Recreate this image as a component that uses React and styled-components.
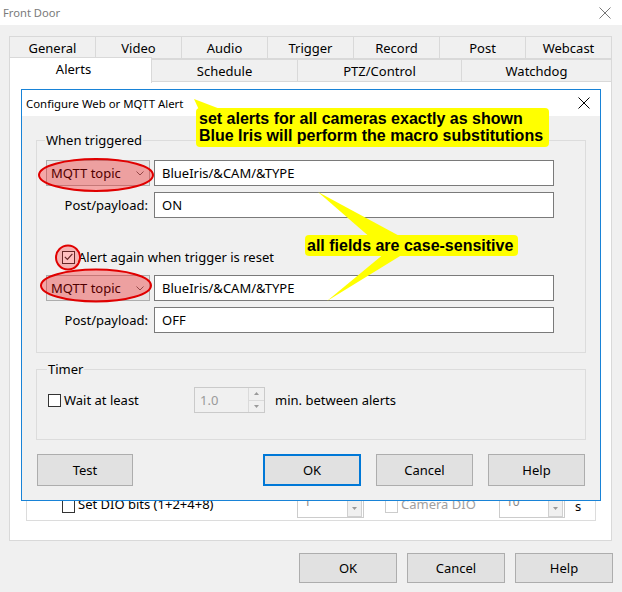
import React from "react";
import styled, { createGlobalStyle } from "styled-components";

const GlobalStyle = createGlobalStyle`
  html, body {
    margin: 0;
    padding: 0;
    background: #f0f0f0;
  }
  body {
    font-family: "Noto Sans", "Open Sans", sans-serif;
    font-size: 12px;
    color: #000;
  }
  * {
    box-sizing: border-box;
  }
`;

const Window = styled.div`
  width: 622px;
  height: 592px;
  background: #f0f0f0;
  display: flex;
  flex-direction: column;
  overflow: hidden;
`;

const TitleBar = styled.div`
  height: 25px;
  flex: none;
  background: #fff;
  display: flex;
  align-items: center;
  justify-content: space-between;
  padding: 0 11px 0 3px;
`;

const TitleText = styled.span`
  color: #7a7a7a;
  font-size: 11.2px;
`;

const Body = styled.div`
  padding: 11px 9px 0 9px;
  display: flex;
  flex-direction: column;
`;

const TabRow = styled.div`
  display: flex;
  height: 23px;
  margin-right: 1px;
`;

const Tab = styled.div`
  flex: ${(p) => (p.$w ? `0 0 ${p.$w}px` : "1")};
  display: flex;
  align-items: center;
  justify-content: center;
  border: 1px solid #d9d9d9;
  margin-left: -1px;
  background: ${(p) => (p.$active ? "#fff" : "#f0f0f0")};
  font-size: 13px;
  position: relative;
  z-index: ${(p) => (p.$active ? 2 : 1)};
  margin-top: ${(p) => (p.$active ? "-2px" : "0")};
  height: ${(p) => (p.$active ? "26px" : "23px")};
  border-bottom: ${(p) => (p.$active ? "none" : "1px solid #d9d9d9")};
  padding: ${(p) => (p.$active ? "0 14px 3px 0" : "0")};
  &:first-child {
    margin-left: 0;
  }
`;

const Panel = styled.div`
  height: 459px;
  margin-right: 1px;
  background: #fff;
  border: 1px solid #d9d9d9;
  border-top: none;
  position: relative;
  display: flex;
  flex-direction: column;
  justify-content: flex-end;
  padding: 0 15px 19px 16px;
`;

const DioGroup = styled.div`
  height: 60px;
  border: 1px solid #dcdcdc;
  display: flex;
  align-items: flex-end;
  padding: 0 0 2px 35px;
`;

const DioRow = styled.div`
  display: flex;
  align-items: center;
  height: 24px;
`;

const CheckLabel = styled.label`
  display: flex;
  align-items: center;
  width: ${(p) => p.$w}px;
  margin-left: ${(p) => p.$ml || 0}px;
  font-size: 13px;
  color: ${(p) => (p.$disabled ? "#a0a0a0" : "#000")};
`;

const RaisedText = styled.span`
  margin-bottom: 5px;
`;

const Box = styled.span`
  width: 13px;
  height: 13px;
  flex: none;
  border: 1px solid ${(p) => (p.$disabled ? "#cccccc" : "#333")};
  background: #fff;
  margin-right: 3px;
  display: flex;
  align-items: center;
  justify-content: center;
`;

const ComboInput = styled.div`
  width: ${(p) => p.$w}px;
  height: 24px;
  border: 1px solid #ccc;
  background: #fff;
  display: flex;
  align-items: flex-start;
  justify-content: space-between;
  padding: 0 1px 0 6px;
  color: #888;
  font-size: 12px;
  line-height: 14px;
`;

const ComboArrow = styled.span`
  width: 15px;
  height: 17px;
  margin-top: 5px;
  background: #f0f0f0;
  border: 1px solid #d0d0d0;
  display: flex;
  align-items: center;
  justify-content: center;
`;

const Unit = styled.span`
  margin-left: 10px;
  font-size: 13px;
`;

const Dialog = styled.div`
  position: absolute;
  left: 11px;
  top: 7px;
  width: 580px;
  border: 1px solid #1883d7;
  background: #f0f0f0;
  z-index: 5;
`;

const DialogTitle = styled.div`
  height: 26px;
  background: #fff;
  display: flex;
  align-items: center;
  justify-content: space-between;
  padding: 0 10px 0 4px;
  font-size: 11.4px;
`;

const DialogBody = styled.div`
  padding: 15px 14px 14px 14px;
  display: flex;
  flex-direction: column;
`;

const Group = styled.fieldset`
  margin: ${(p) => p.$mt || 0}px 0 0 0;
  border: 1px solid #dcdcdc;
  padding: ${(p) => p.$pad};
  min-width: 0;
`;

const Legend = styled.legend`
  padding: 0 1px;
  margin-left: -1px;
  font-size: 13px;
  line-height: 18px;
`;

const FieldGrid = styled.div`
  display: grid;
  grid-template-columns: 104px 1fr;
  column-gap: 4px;
  row-gap: 6px;
  margin-top: ${(p) => p.$mt || 0}px;
`;

const Dropdown = styled.div`
  height: 26px;
  background: #e5e5e5;
  border: 1px solid #adadad;
  display: flex;
  align-items: center;
  justify-content: space-between;
  padding: 0 5px 0 4px;
  font-size: 13px;
`;

const FieldLabel = styled.div`
  height: 26px;
  display: flex;
  align-items: center;
  justify-content: flex-end;
  padding-right: 2px;
  font-size: 13px;
`;

const TextField = styled.div`
  height: 26px;
  background: #fff;
  border: 1px solid #7a7a7a;
  display: flex;
  align-items: center;
  padding-left: 7px;
  font-size: 13px;
`;

const CheckRow = styled.div`
  display: flex;
  align-items: center;
  height: 18px;
  margin-top: ${(p) => p.$mt || 0}px;
  padding-left: ${(p) => p.$pl || 0}px;
  font-size: 13px;
`;

const TimerRow = styled.div`
  display: flex;
  align-items: center;
  height: 26px;
  font-size: 13px;
`;

const Spin = styled.div`
  width: 71px;
  height: 26px;
  border: 1px solid #cacaca;
  background: #f0f0f0;
  display: flex;
  color: #9a9a9a;
  margin-right: 10px;
`;

const SpinValue = styled.div`
  flex: 1;
  display: flex;
  align-items: center;
  padding-left: 5px;
`;

const SpinButtons = styled.div`
  width: 16px;
  display: flex;
  flex-direction: column;
  border-left: 1px solid #dadada;
`;

const SpinButton = styled.div`
  flex: 1;
  display: flex;
  align-items: center;
  justify-content: center;
  & + & {
    border-top: 1px solid #dadada;
  }
`;

const ButtonRow = styled.div`
  display: flex;
  margin-top: 14px;
  padding-left: 1px;
  gap: 15px;
`;

const Button = styled.div`
  width: ${(p) => p.$w || 97}px;
  height: ${(p) => p.$h || 32}px;
  background: #e1e1e1;
  border: ${(p) => (p.$default ? "2px solid #0078d7" : "1px solid #adadad")};
  display: flex;
  align-items: center;
  justify-content: center;
  font-size: 13px;
  margin-left: ${(p) => p.$ml || 0}px;
`;

const Footer = styled.div`
  display: flex;
  justify-content: flex-end;
  gap: 10px;
  margin-top: 12px;
`;

const Overlay = styled.div`
  position: absolute;
  inset: 0;
  pointer-events: none;
`;

const Callout = styled.div`
  position: absolute;
  left: ${(p) => p.$x}px;
  top: ${(p) => p.$y}px;
  background: #ffff00;
  border-radius: 4px;
  padding: ${(p) => p.$pad};
  font-family: "Liberation Sans", Arial, sans-serif;
  font-weight: bold;
  font-size: 16px;
  line-height: 17px;
  white-space: nowrap;
  color: #000;
`;

const Cross = ({ color = "#000", size = 12 }) => (
  <svg width={size} height={size} viewBox="0 0 12 12">
    <path d="M0.5 0.5 L11.5 11.5 M11.5 0.5 L0.5 11.5" stroke={color} strokeWidth="1" />
  </svg>
);

const Chevron = () => (
  <svg width="8" height="5" viewBox="0 0 8 5">
    <path d="M0.5 0.5 L4 4 L7.5 0.5" fill="none" stroke="#666" strokeWidth="1" />
  </svg>
);

const Tick = () => (
  <svg width="9" height="8" viewBox="0 0 9 8">
    <path d="M0.8 3.8 L3.4 6.4 L8.4 0.8" fill="none" stroke="#333" strokeWidth="1.2" />
  </svg>
);

const Tri = ({ up }) => (
  <svg width="5" height="3" viewBox="0 0 5 3">
    <path d={up ? "M0 3 L2.5 0 L5 3 Z" : "M0 0 L2.5 3 L5 0 Z"} fill="#9a9a9a" />
  </svg>
);

const CheckBox = ({ checked, disabled }) => (
  <Box $disabled={disabled}>{checked && <Tick />}</Box>
);

function Annotations() {
  return (
    <Overlay>
      <svg width="578" height="410" style={{ position: "absolute", left: 0, top: 0 }}>
        <polygon points="172,9 178,22 206,22" fill="#ffff00" />
        <polygon points="296,102 350,149 383,149" fill="#ffff00" />
        <polygon points="305,211 363,163 383,163" fill="#ffff00" />
        <ellipse cx="74" cy="85" rx="57" ry="16" fill="rgba(255,0,0,0.3)" stroke="#e00000" strokeWidth="2" />
        <ellipse cx="74" cy="195.5" rx="55" ry="16" fill="rgba(255,0,0,0.3)" stroke="#e00000" strokeWidth="2" />
        <circle cx="46" cy="167.5" r="12" fill="rgba(255,0,0,0.25)" stroke="#e00000" strokeWidth="2" />
      </svg>
      <Callout $x={174} $y={18} $pad="2px 6px 3px 3px">
        set alerts for all cameras exactly as shown
        <br />
        Blue Iris will perform the macro substitutions
      </Callout>
      <Callout $x={283} $y={145} $pad="2px 5px 2px 2px">
        all fields are case-sensitive
      </Callout>
    </Overlay>
  );
}

function AlertDialog() {
  return (
    <Dialog>
      <DialogTitle>
        <span>Configure Web or MQTT Alert</span>
        <Cross />
      </DialogTitle>
      <DialogBody>
        <Group $pad="11px 31px 19px 9px">
          <Legend>When triggered</Legend>
          <FieldGrid>
            <Dropdown>
              MQTT topic <Chevron />
            </Dropdown>
            <TextField>BlueIris/&amp;CAM/&amp;TYPE</TextField>
            <FieldLabel>Post/payload:</FieldLabel>
            <TextField>ON</TextField>
          </FieldGrid>
          <CheckRow $mt={30} $pl={16}>
            <CheckBox checked />
            Alert again when trigger is reset
          </CheckRow>
          <FieldGrid $mt={9}>
            <Dropdown>
              MQTT topic <Chevron />
            </Dropdown>
            <TextField>BlueIris/&amp;CAM/&amp;TYPE</TextField>
            <FieldLabel>Post/payload:</FieldLabel>
            <TextField>OFF</TextField>
          </FieldGrid>
        </Group>
        <Group $mt={7} $pad="9px 10px 26px 11px">
          <Legend>Timer</Legend>
          <TimerRow>
            <CheckLabel $w={146}>
              <CheckBox />
              Wait at least
            </CheckLabel>
            <Spin>
              <SpinValue>1.0</SpinValue>
              <SpinButtons>
                <SpinButton>
                  <Tri up />
                </SpinButton>
                <SpinButton>
                  <Tri />
                </SpinButton>
              </SpinButtons>
            </Spin>
            min. between alerts
          </TimerRow>
        </Group>
        <ButtonRow>
          <Button $w={96}>Test</Button>
          <Button $ml={115} $w={98} $default>
            OK
          </Button>
          <Button>Cancel</Button>
          <Button>Help</Button>
        </ButtonRow>
      </DialogBody>
      <Annotations />
    </Dialog>
  );
}

export default function App() {
  const topTabs = ["General", "Video", "Audio", "Trigger", "Record", "Post", "Webcast"];
  const bottomTabs = [
    { label: "Alerts", w: 143, active: true },
    { label: "Schedule", w: 147 },
    { label: "PTZ/Control", w: 165 },
    { label: "Watchdog" },
  ];
  return (
    <Window>
      <GlobalStyle />
      <TitleBar>
        <TitleText>Front Door</TitleText>
        <Cross color="#777" />
      </TitleBar>
      <Body>
        <TabRow>
          {topTabs.map((t) => (
            <Tab key={t}>{t}</Tab>
          ))}
        </TabRow>
        <TabRow>
          {bottomTabs.map((t) => (
            <Tab key={t.label} $w={t.w} $active={t.active}>
              {t.label}
            </Tab>
          ))}
        </TabRow>
        <Panel>
          <DioGroup>
            <DioRow>
              <CheckLabel $w={235}>
                <CheckBox />
                <RaisedText>Set DIO bits (1+2+4+8)</RaisedText>
              </CheckLabel>
              <ComboInput $w={67}>
                1
                <ComboArrow>
                  <Tri />
                </ComboArrow>
              </ComboInput>
              <CheckLabel $w={114} $ml={21} $disabled>
                <CheckBox disabled />
                <RaisedText>Camera DIO</RaisedText>
              </CheckLabel>
              <ComboInput $w={66}>
                10
                <ComboArrow>
                  <Tri />
                </ComboArrow>
              </ComboInput>
              <Unit>s</Unit>
            </DioRow>
          </DioGroup>
          <AlertDialog />
        </Panel>
        <Footer>
          <Button $w={98} $h={30}>OK</Button>
          <Button $w={98} $h={30}>Cancel</Button>
          <Button $w={98} $h={30}>Help</Button>
        </Footer>
      </Body>
    </Window>
  );
}
